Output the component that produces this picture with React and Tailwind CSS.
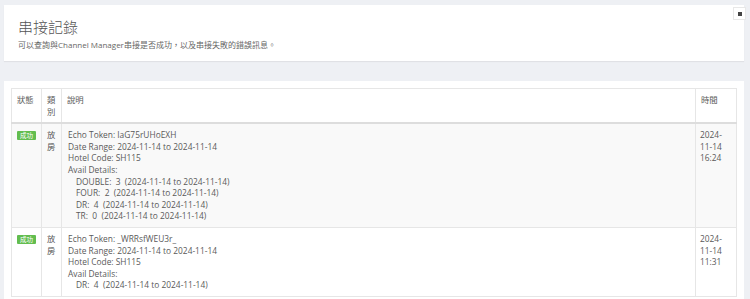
const ROWS = [
  {
    status: '成功',
    type: '放房',
    token: 'IaG75rUHoEXH',
    range: '2024-11-14 to 2024-11-14',
    hotel: 'SH115',
    details: [
      'DOUBLE:  3  (2024-11-14 to 2024-11-14)',
      'FOUR:  2  (2024-11-14 to 2024-11-14)',
      'DR:  4  (2024-11-14 to 2024-11-14)',
      'TR:  0  (2024-11-14 to 2024-11-14)',
    ],
    time: ['2024-', '11-14', '16:24'],
  },
  {
    status: '成功',
    type: '放房',
    token: '_WRRsfWEU3r_',
    range: '2024-11-14 to 2024-11-14',
    hotel: 'SH115',
    details: ['DR:  4  (2024-11-14 to 2024-11-14)'],
    time: ['2024-', '11-14', '11:31'],
  },
]

const font = { fontFamily: '"Open Sans", "Noto Sans CJK TC", sans-serif' }

export default function App() {
  return (
    <div className="min-h-screen bg-[#eef0f4] pt-[5px] text-[#555]" style={font}>
      <div className="relative ml-[4px] w-[740px] bg-white px-[14px] pt-[11px] pb-[11px] shadow-[0_1px_1px_rgba(0,0,0,0.06)]">
        <h1 className="text-[15px] font-light leading-[22px] text-[#555]">串接記錄</h1>
        <p className="mt-[1px] text-[8px] leading-[11px] text-[#666]">
          可以查詢與Channel Manager串接是否成功，以及串接失敗的錯誤訊息。
        </p>
        <span className="absolute right-[-2px] top-[2px] flex h-[13px] w-[13px] items-center justify-center border border-[#e8e8e8] bg-white">
          <span className="h-[4px] w-[4px] bg-[#444]" />
        </span>
      </div>

      <div className="ml-[4px] mt-[20px] w-[740px] bg-white px-[7px] pt-[7px] pb-[10px]">
        <table className="w-[726px] table-fixed border-collapse text-[8.4px] leading-[11.6px] text-[#5a5a5a]">
          <colgroup>
            <col className="w-[30px]" />
            <col className="w-[20px]" />
            <col />
            <col className="w-[41px]" />
          </colgroup>
          <thead>
            <tr className="border-b-2 border-[#ddd] align-top">
              <th className="border border-[#e6e6e6] px-[5px] py-[5px] text-left font-normal">狀態</th>
              <th className="border border-[#e6e6e6] px-[5px] py-[5px] text-left font-normal">類別</th>
              <th className="border border-[#e6e6e6] px-[5px] py-[5px] text-left font-normal">說明</th>
              <th className="border border-[#e6e6e6] px-[5px] py-[5px] text-left font-normal">時間</th>
            </tr>
          </thead>
          <tbody>
            {ROWS.map((r, i) => (
              <tr key={r.token} className={`align-top ${i % 2 === 0 ? 'bg-[#f9f9f9]' : 'bg-white'}`}>
                <td className="border border-[#e6e6e6] px-[5px] py-[5px]">
                  <span className="mt-[2px] inline-block whitespace-nowrap rounded-[1px] bg-[#62bd4f] px-[3px] text-[6.5px] leading-[9px] text-white">
                    {r.status}
                  </span>
                </td>
                <td className="border border-[#e6e6e6] px-[5px] py-[5px]">{r.type}</td>
                <td className="border border-[#e6e6e6] px-[6px] py-[5px]">
                  <div>Echo Token: {r.token}</div>
                  <div>Date Range: {r.range}</div>
                  <div>Hotel Code: {r.hotel}</div>
                  <div>Avail Details:</div>
                  {r.details.map((d) => (
                    <div key={d} className="whitespace-pre pl-[8px]">{d}</div>
                  ))}
                </td>
                <td className="border border-[#e6e6e6] px-[4px] py-[5px]">
                  {r.time.map((t) => (
                    <div key={t}>{t}</div>
                  ))}
                </td>
              </tr>
            ))}
          </tbody>
        </table>
      </div>
    </div>
  )
}
